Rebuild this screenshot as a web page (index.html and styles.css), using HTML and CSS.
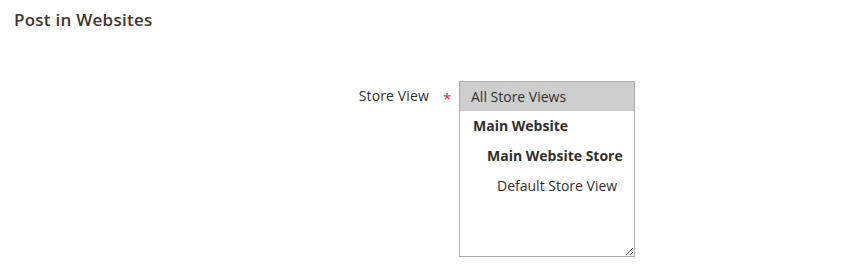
FILE: index.html
```html
<!DOCTYPE html>
<html lang="en">
<head>
    <meta charset="UTF-8">
    <title>Post in Websites</title>
    <link rel="stylesheet" href="styles.css">
</head>
<body>
    <div class="fieldset-wrapper">
        <h2 class="fieldset-title">Post in Websites</h2>
        <div class="field">
            <label class="field-label"><span>Store View</span></label>
            <div class="field-control">
                <div class="multiselect">
                    <div class="option selected">All Store Views</div>
                    <div class="option group">Main Website</div>
                    <div class="option group group-store">Main Website Store</div>
                    <div class="option store-view">Default Store View</div>
                </div>
            </div>
        </div>
    </div>
</body>
</html>
```

FILE: styles.css
```css
body {
    margin: 0;
    font-family: "Open Sans", "Liberation Sans", sans-serif;
    color: #303030;
    background: #fff;
}

.fieldset-wrapper {
    padding: 8px 14px;
}

.fieldset-title {
    margin: 0;
    font-size: 17px;
    font-weight: 600;
    letter-spacing: 0.015em;
    line-height: 24px;
    color: #41362f;
}

.field {
    display: flex;
    margin-top: 49px;
}

.field-label {
    width: 415px;
    padding-right: 30px;
    text-align: right;
    font-size: 14px;
    letter-spacing: 0.01em;
    line-height: 30px;
}

.field-label span {
    position: relative;
}

.field-label span::after {
    content: "*";
    position: absolute;
    left: 100%;
    top: -3px;
    margin-left: 14px;
    color: #e22626;
    font-size: 15px;
}

.multiselect {
    box-sizing: border-box;
    width: 176px;
    height: 176px;
    border: 1px solid #adadad;
    overflow: auto;
    resize: both;
    font-size: 14px;
}

.option {
    height: 29px;
    line-height: 29px;
    padding-left: 11px;
    white-space: nowrap;
}

.option.selected {
    background: #cecece;
}

.option + .option {
    height: 30px;
    line-height: 30px;
}

.option.group {
    font-weight: 700;
    padding-left: 13px;
}

.option.group-store {
    padding-left: 27px;
}

.option.store-view {
    padding-left: 37px;
}
```
